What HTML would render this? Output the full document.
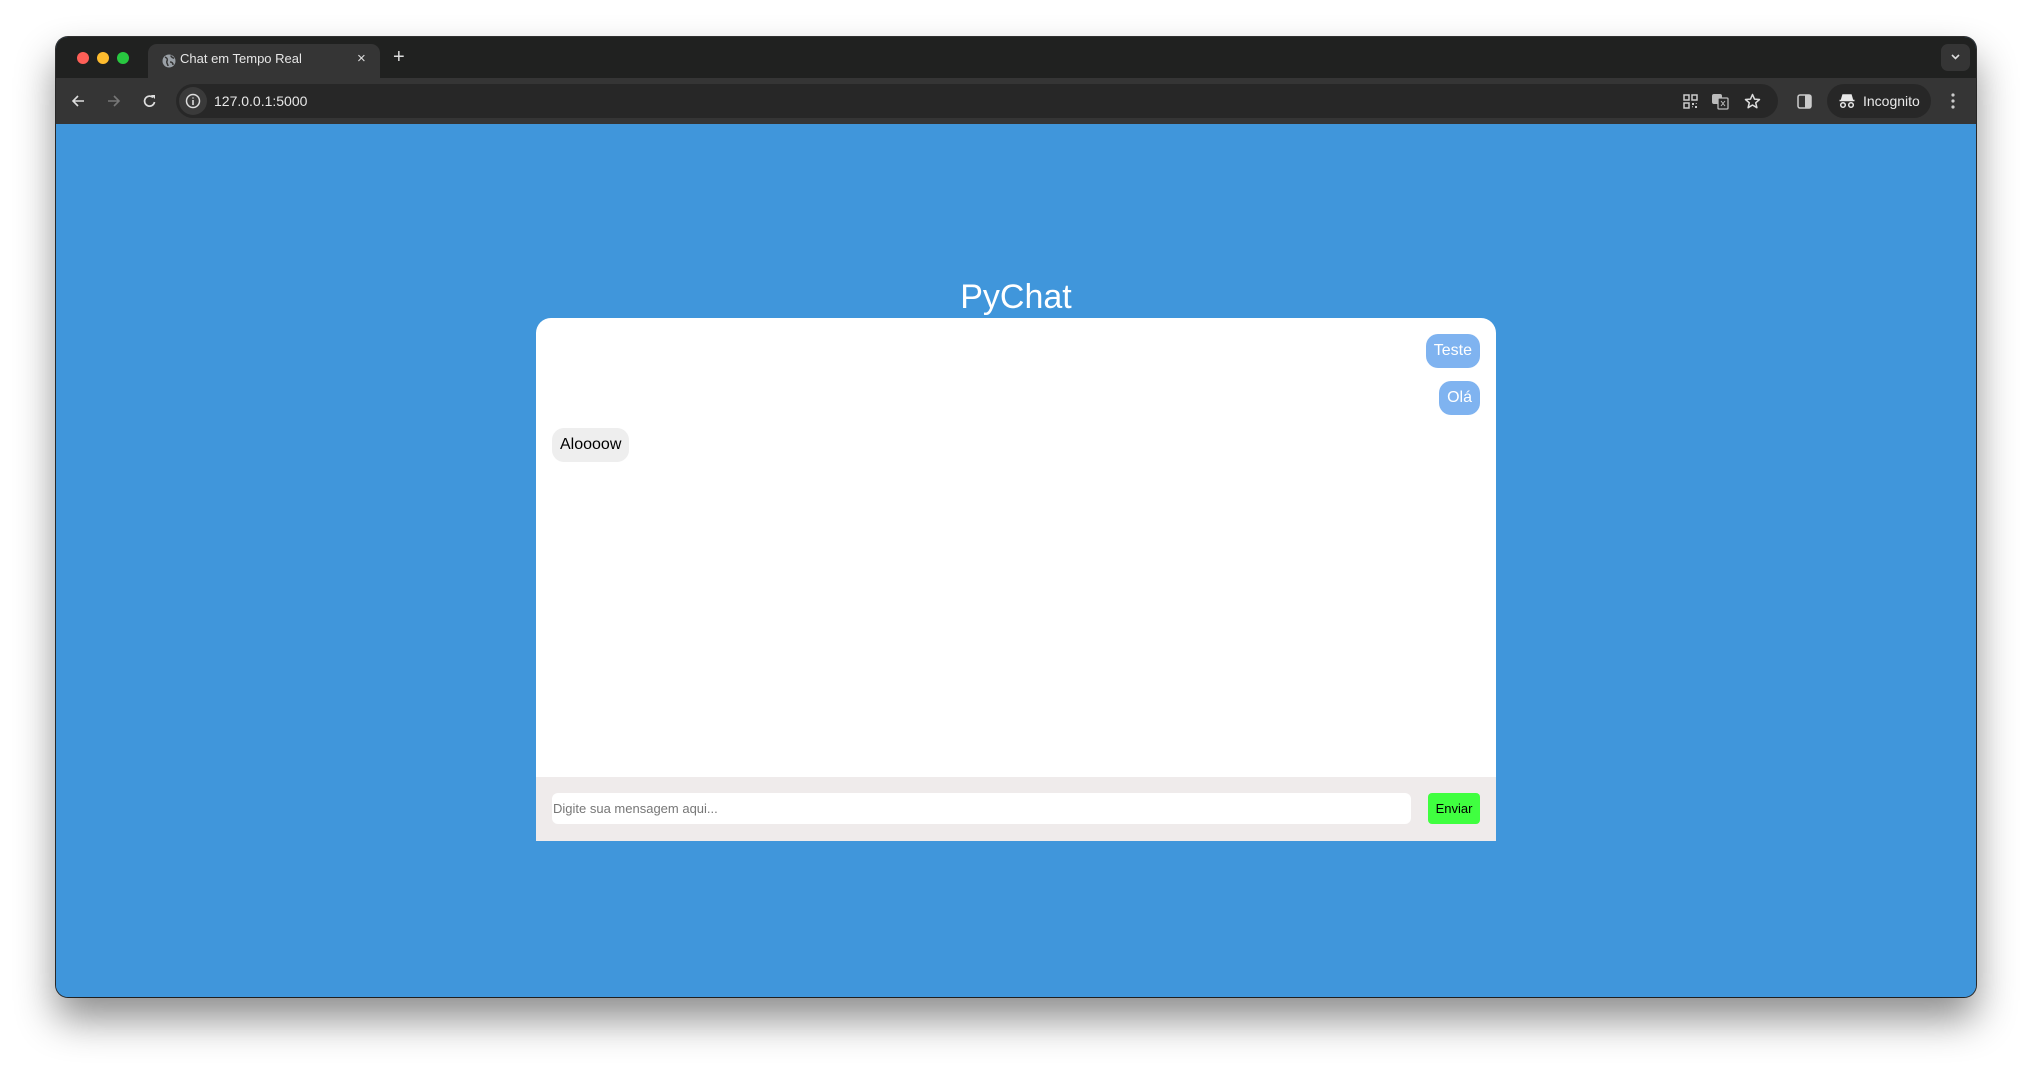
<!DOCTYPE html>
<html><head><meta charset="utf-8"><style>
*{box-sizing:border-box;margin:0;padding:0}
body{width:2032px;height:1070px;background:#fff;position:relative;overflow:hidden;font-family:"Liberation Sans",Arial,sans-serif}
.win{position:absolute;left:56px;top:37px;width:1920px;height:960px;border-radius:12px;overflow:hidden;background:#4096db;box-shadow:0 22px 40px rgba(0,0,0,.45),0 0 0 1px #333;}
.tabs{position:absolute;left:0;top:0;width:100%;height:41px;background:#202120}
.toolbar{position:absolute;left:0;top:41px;width:100%;height:46px;background:#353535}
.light{position:absolute;top:15px;width:12px;height:12px;border-radius:50%}
.tab{position:absolute;left:92px;top:7px;width:232px;height:34px;background:#353535;border-radius:9px 9px 0 0}
.tab .t{position:absolute;left:32px;top:7px;color:#e6e6e6;font-size:13px}
.addr{position:absolute;left:120px;top:6px;width:1602px;height:34px;background:#272727;border-radius:17px}
.url{position:absolute;left:38px;top:9px;color:#e8e8e8;font-size:14px}
.inc{position:absolute;left:1771px;top:6px;width:104px;height:34px;background:#272727;border-radius:17px;color:#e8e8e8;font-size:14px}
.page{position:absolute;left:0;top:87px;width:100%;height:873px;background:#4096db}
h1{position:absolute;left:0;width:100%;top:154px;text-align:center;color:#fff;font-weight:normal;font-size:34px}
.card{position:absolute;left:480px;top:194px;width:960px;height:523px;background:#fff;border-radius:15px 15px 0 0;overflow:hidden}
.b{position:absolute;height:34px;line-height:34px;padding:0 8px;border-radius:12px;font-size:16px}
.me{background:#7fb3f0;color:#fff}
.foot{position:absolute;left:0;bottom:0;width:100%;height:64px;background:#efebeb}
.inp{position:absolute;left:16px;top:16px;width:859px;height:31px;background:#fff;border-radius:6px;color:#777;font-size:13px;line-height:31px;padding-left:1px}
.btn{position:absolute;left:892px;top:16px;width:52px;height:31px;background:#40ff40;border-radius:4px;font-size:13px;line-height:31px;text-align:center;color:#000}
</style></head><body>
<div class="win">
 <div class="tabs">
  <div class="light" style="left:21px;background:#fe5f57"></div>
  <div class="light" style="left:41px;background:#febc2e"></div>
  <div class="light" style="left:61px;background:#28c840"></div>
  <div class="tab">
   <svg style="position:absolute;left:14px;top:10px" width="14" height="14" viewBox="0 0 14 14"><circle cx="7" cy="7" r="6.5" fill="#9aa0a6"/><path d="M3 3c2 1 3 2 2 4s1 3 1 5M9 1.5c0 2 2 2 3 3M8 8c2 0 3 1 3 3" stroke="#353535" stroke-width="1.5" fill="none"/></svg>
   <span class="t">Chat em Tempo Real</span>
   <span style="position:absolute;left:209px;top:6px;color:#ddd;font-size:15px">×</span>
  </div>
  <span style="position:absolute;left:337px;top:9px;color:#ddd;font-size:20px">+</span>
  <div style="position:absolute;left:1885px;top:7px;width:29px;height:27px;background:#353535;border-radius:7px">
   <svg style="position:absolute;left:9px;top:9px" width="11" height="8"><path d="M2 2l3.5 3.5L9 2" stroke="#ddd" stroke-width="1.6" fill="none"/></svg></div>
 </div>
 <div class="toolbar">
  <svg style="position:absolute;left:14px;top:15px" width="16" height="16"><path d="M14 8H3M8 3L3 8l5 5" stroke="#ddd" stroke-width="1.6" fill="none"/></svg>
  <svg style="position:absolute;left:50px;top:15px" width="16" height="16"><path d="M2 8h11M8 3l5 5-5 5" stroke="#777" stroke-width="1.6" fill="none"/></svg>
  <svg style="position:absolute;left:86px;top:15px" width="16" height="16"><path d="M12.5 9A5 5 0 1 1 11 4.5" stroke="#ddd" stroke-width="1.7" fill="none"/><path d="M9 2h4v4z" fill="#ddd"/></svg>
  <div class="addr">
   <div style="position:absolute;left:3px;top:3px;width:28px;height:28px;border-radius:50%;background:#3a3a3a"></div>
   <svg style="position:absolute;left:9px;top:9px" width="16" height="16"><circle cx="8" cy="8" r="6.5" stroke="#ddd" stroke-width="1.5" fill="none"/><path d="M8 7v5M8 4.5v1" stroke="#ddd" stroke-width="1.6"/></svg>
   <span class="url">127.0.0.1:5000</span>
   <svg style="position:absolute;left:1507px;top:10px" width="15" height="15"><g fill="none" stroke="#ccc" stroke-width="1.5"><rect x="1" y="1" width="5" height="5"/><rect x="9" y="1" width="5" height="5"/><rect x="1" y="9" width="5" height="5"/></g><path d="M9 9h2v2H9zM12 12h2v2h-2zM12 9h2v1M9 12h1v2" fill="#ccc"/></svg>
   <svg style="position:absolute;left:1535px;top:8px" width="18" height="18"><rect x="1" y="2" width="10" height="10" rx="2" fill="#bbb"/><rect x="7" y="6" width="10" height="11" rx="1" fill="#272727" stroke="#bbb" stroke-width="1.3"/><path d="M10 9l4 5M14 9l-4 5" stroke="#bbb" stroke-width="1"/></svg>
   <svg style="position:absolute;left:1568px;top:9px" width="17" height="17"><path d="M8.5 1.5l2 4.6 5 .4-3.8 3.3 1.2 4.9-4.4-2.7-4.4 2.7 1.2-4.9L1.5 6.5l5-.4z" stroke="#ddd" stroke-width="1.5" fill="none" stroke-linejoin="round"/></svg>
  </div>
  <svg style="position:absolute;left:1741px;top:16px" width="15" height="15"><rect x="1" y="1" width="13" height="13" rx="2" stroke="#ccc" stroke-width="1.5" fill="none"/><rect x="8" y="1" width="6" height="13" fill="#ccc"/></svg>
  <div class="inc">
   <svg style="position:absolute;left:12px;top:9px" width="16" height="16"><path d="M4 2h8l1.5 5h-11z M0.5 7.5h15" stroke="#e8e8e8" stroke-width="1.5" fill="#e8e8e8"/><circle cx="4" cy="12" r="2.3" stroke="#e8e8e8" stroke-width="1.5" fill="none"/><circle cx="12" cy="12" r="2.3" stroke="#e8e8e8" stroke-width="1.5" fill="none"/></svg>
   <span style="position:absolute;left:36px;top:9px">Incognito</span>
  </div>
  <svg style="position:absolute;left:1895px;top:14px" width="4" height="18"><circle cx="2" cy="3" r="1.6" fill="#ccc"/><circle cx="2" cy="9" r="1.6" fill="#ccc"/><circle cx="2" cy="15" r="1.6" fill="#ccc"/></svg>
 </div>
 <div class="page">
  <h1>PyChat</h1>
  <div class="card">
   <div class="b me" style="right:16px;top:16px">Teste</div>
   <div class="b me" style="right:16px;top:63px">Olá</div>
   <div class="b" style="left:16px;top:110px;background:#eeeeee;color:#000">Aloooow</div>
   <div class="foot">
    <div class="inp">Digite sua mensagem aqui...</div>
    <div class="btn">Enviar</div>
   </div>
  </div>
 </div>
</div>
</body></html>
